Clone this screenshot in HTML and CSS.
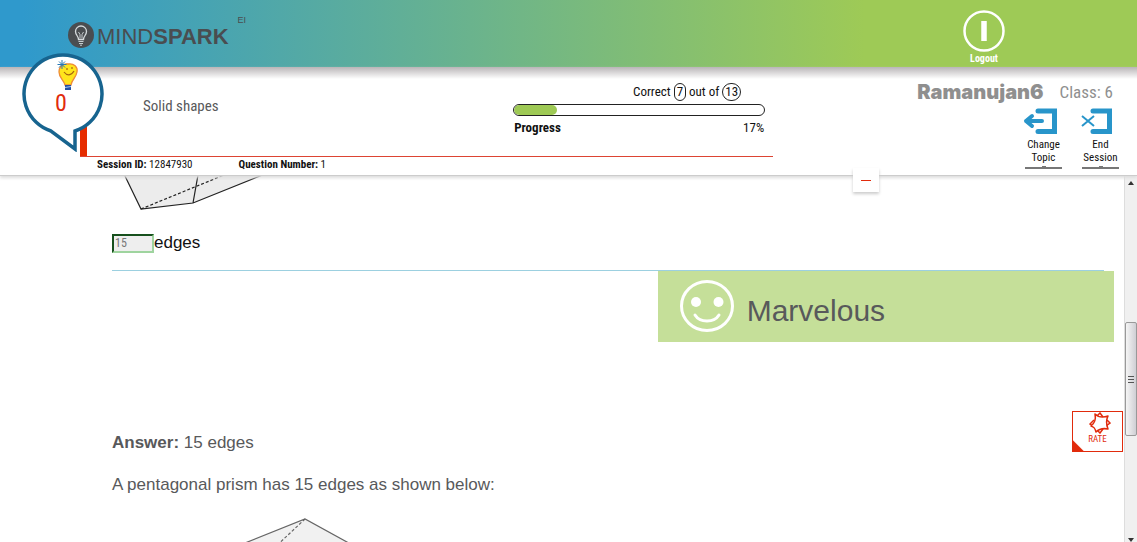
FILE: index.html
```html
<!DOCTYPE html>
<html lang="en">
<head>
<meta charset="utf-8">
<title>Mindspark</title>
<link rel="stylesheet" href="styles.css">
</head>
<body>
<header class="topbar">
  <a class="logo" href="#">
    <svg class="logo-mark" viewBox="0 0 26 26" aria-hidden="true">
      <circle cx="13" cy="13" r="13" fill="#4a4d50"/>
      <path d="M10.500 17.500C10.500 14 7.500 13 7.500 9.500a5.500 5.500 0 0 1 11 0C18.500 13 15.500 14 15.500 17.500z" fill="none" stroke="#d5dadc" stroke-width="1.300"/>
      <path d="M12 16.500v-4l-1.500-2.500M14 16.500v-4l1.500-2.500M10.500 19.500h5M11 21.500h4M12 23.200h2" fill="none" stroke="#d5dadc" stroke-width="0.900"/>
    </svg>
    <span class="logo-text">MIND<b>SPARK</b></span>
    <span class="logo-sup">EI</span>
  </a>
  <button class="logout" type="button">
    <svg class="logout-icon" viewBox="0 0 42 42" aria-hidden="true">
      <circle cx="21" cy="21" r="19.500" fill="none" stroke="#fff" stroke-width="2.500"/>
      <path d="M21 11v20" stroke="#fff" stroke-width="5.500"/>
    </svg>
    <span>Logout</span>
  </button>
</header>

<section class="info">
  <div class="sparkies">
    <svg class="bubble" viewBox="0 0 84 100" aria-hidden="true">
      <path d="M29 79A39 39 0 1 1 53 79V97Z" fill="#fff" stroke="#17648f" stroke-width="3.500"/>
      <path d="M43 33c-1-5-6-7-6-13 0-6 5-9 9-8 6-1 10 3 9 8-1 6-5 7-6 13z" fill="#ffe51c" stroke="#ee8b38" stroke-width="1.300"/>
      <path d="M43 33h6v5h-6z" fill="#2450a0"/>
      <path d="M43 35.500l6-1" stroke="#a9c4ef" stroke-width="1"/>
      <path d="M40 8v9M35.500 12.500h9M37 9.500l6 6M43 9.500l-6 6" stroke="#2879b5" stroke-width="1"/>
      <path d="M45 16v2M50 15v2M42 20c3 4 7 4 10-1" fill="none" stroke="#a76510" stroke-width="1.200"/>
    </svg>
    <span class="spark-count">0</span>
  </div>
  <div class="session">
    <div class="session-top">
      <h1 class="topic">Solid shapes</h1>
      <div class="progress">
        <p class="score">Correct <span class="ring">7</span> out of <span class="ring">13</span></p>
        <div class="track" role="progressbar" aria-label="Progress" aria-valuenow="17" aria-valuemin="0" aria-valuemax="100"><div class="fill" style="width:17%"></div></div>
        <p class="progress-row"><b>Progress</b><span>17%</span></p>
      </div>
    </div>
    <div class="session-row">
      <span class="session-id"><b>Session ID:</b> 12847930</span>
      <span><b>Question Number:</b> 1</span>
    </div>
  </div>
  <div class="user">
    <p class="user-row"><span class="user-name">Ramanujan6</span><span>Class: 6</span></p>
    <div class="actions">
      <button class="action" type="button">
        <svg class="action-icon" viewBox="0 0 34 26" aria-hidden="true">
          <path d="M13 3h16.500v20.500H13" fill="none" stroke="#2895ca" stroke-width="5" stroke-linecap="round"/>
          <path d="M17 13H1M7 8l-6 5 6 5" fill="none" stroke="#fff" stroke-width="7"/>
          <path d="M17 13H1M7 8l-6 5 6 5" fill="none" stroke="#2895ca" stroke-width="4" stroke-linecap="round" stroke-linejoin="round"/>
        </svg>
        <span>Change<br>Topic</span>
      </button>
      <button class="action" type="button">
        <svg class="action-icon" viewBox="0 0 34 26" aria-hidden="true">
          <path d="M11 3h16.500v20.500H11" fill="none" stroke="#2895ca" stroke-width="5" stroke-linecap="round"/>
          <path d="M0 8l12 10M12 8L0 18" fill="none" stroke="#fff" stroke-width="5"/>
          <path d="M0 8l12 10M12 8L0 18" fill="none" stroke="#2895ca" stroke-width="2"/>
        </svg>
        <span>End<br>Session</span>
      </button>
    </div>
  </div>
  <button class="collapse" type="button" aria-label="Collapse header"></button>
</section>

<div class="stage">
  <main class="question">
    <svg class="figure" width="160" height="37" viewBox="0 0 160 37" role="img" aria-label="Pentagonal prism">
      <path d="M12 -2L29 33 81 27 153 -2z" fill="#ececec"/>
      <path d="M12 -2L29 33 81 27 153 -2M86 -1L81 27" fill="none" stroke="#222" stroke-width="1.200"/>
      <path d="M29 33L112 -1" stroke="#222" stroke-width="1.200" stroke-dasharray="3 2"/>
    </svg>
    <p class="blank"><input class="blank-input" id="edges" type="text" value="15" readonly><label for="edges">edges</label></p>
    <div class="feedback">
      <div class="praise">
        <svg class="smiley" viewBox="0 0 54 52" aria-hidden="true">
          <ellipse cx="27" cy="26" rx="25.500" ry="24.500" fill="none" stroke="#fff" stroke-width="3"/>
          <circle cx="16" cy="22" r="5" fill="#fff"/>
          <circle cx="38.500" cy="22" r="5" fill="#fff"/>
          <path d="M15 35c5 8 19 8 24 0" fill="none" stroke="#fff" stroke-width="3" stroke-linecap="round"/>
        </svg>
        <span>Marvelous</span>
      </div>
    </div>
    <div class="answer">
      <p><b>Answer:</b> 15 edges</p>
      <p>A pentagonal prism has 15 edges as shown below:</p>
      <svg class="solution" width="260" height="100" viewBox="0 0 260 100" role="img" aria-label="Pentagonal prism with its edges">
        <path d="M133 26L193 2 255 36 230 100H150z" fill="#f1f1f1"/>
        <path d="M133 26L193 2 255 36" fill="none" stroke="#666" stroke-width="1.200"/>
        <path d="M193 2L160 33" stroke="#666" stroke-width="1.200" stroke-dasharray="3 2"/>
      </svg>
    </div>
  </main>
  <div class="scrollbar" aria-hidden="true">
    <svg class="arrow" viewBox="0 0 6 4"><path d="M0 4l3-4 3 4z" fill="#333"/></svg>
    <div class="thumb"><i></i><i></i><i></i></div>
    <svg class="arrow" viewBox="0 0 6 4"><path d="M0 0h6L3 4z" fill="#333"/></svg>
  </div>
  <button class="rate" type="button">
    <svg class="rate-icon" viewBox="0 0 22 22" aria-hidden="true">
      <path d="M8 4l3-3 3 4M18 8l3 3-4 3M14 17l-3 4-3-3M4 14l-3-2 4-4" fill="none" stroke="#e12b0c" stroke-width="1.500"/>
      <path d="M6 2c3 3 7 4 13 2-2 4-2 8 0 13-5-1-9 0-12 3-1-4-2-5-5-6 4-3 5-7 4-12z" fill="#fff" stroke="#e12b0c" stroke-width="1.500" stroke-linejoin="round"/>
    </svg>
    <span>RATE</span>
  </button>
</div>
</body>
</html>
```

FILE: styles.css
```css
* {
  box-sizing: border-box;
}

body {
  margin: 0;
  height: 100vh;
  display: flex;
  flex-direction: column;
  overflow: hidden;
  background: #fff;
  color: #111;
  font-family: "Liberation Sans", Arial, sans-serif;
}

p, h1 {
  margin: 0;
}

button {
  margin: 0;
  padding: 0;
  border: 0;
  background: none;
  font-family: inherit;
  cursor: pointer;
}

svg {
  display: block;
}

.topbar, .info, .rate {
  font-family: "Liberation Sans Narrow", "Roboto Condensed", "Liberation Sans", sans-serif;
}

.topbar {
  position: relative;
  z-index: 2;
  display: flex;
  justify-content: space-between;
  align-items: flex-start;
  height: 67px;
  flex: none;
  padding: 10px 132px 0 68px;
  background: linear-gradient(90deg, #2f99cc 2%, #9eca56 76%);
}

.logo {
  display: flex;
  align-items: flex-start;
  color: #4a4d50;
  text-decoration: none;
  font-family: "Liberation Sans", Arial, sans-serif;
}

.logo-mark {
  width: 26px;
  height: 26px;
  margin: 12px 3px 0 0;
}

.logo-text {
  margin-top: 13px;
  font-size: 22px;
  line-height: 28px;
}

.logo-sup {
  margin: 5px 0 0 9px;
  font-size: 9px;
  line-height: 10px;
}

.logout {
  display: flex;
  flex-direction: column;
  align-items: center;
  color: #fff;
  font-size: 10px;
  font-weight: bold;
  line-height: 13px;
}

.logout-icon {
  width: 42px;
  height: 42px;
}

.info {
  position: relative;
  z-index: 3;
  display: flex;
  justify-content: space-between;
  flex: none;
  height: 109px;
  border-bottom: 1px solid #ccc;
  box-shadow: 0 2px 3px #ddd;
  background: linear-gradient(#b9b5b7, #fff 12px);
}

.sparkies {
  position: absolute;
  left: 22px;
  top: -15px;
  z-index: 1;
  width: 84px;
}

.bubble {
  width: 84px;
  height: 100px;
}

.spark-count {
  position: absolute;
  top: 38px;
  left: 33px;
  color: #e12b0c;
  font-size: 24px;
  line-height: 26px;
}

.session {
  width: 68%;
  padding-left: 80px;
}

.session-top {
  position: relative;
  display: flex;
  justify-content: space-between;
  align-items: flex-start;
  height: 90px;
  padding: 16px 8px 0 63px;
  border-bottom: 1px solid #dd4433;
}

.session-top::before {
  content: "";
  position: absolute;
  left: 0;
  bottom: 0;
  width: 7px;
  height: 32px;
  background: #e62c00;
}

.topic {
  margin-top: 13px;
  color: #58595b;
  font-size: 15px;
  font-weight: normal;
  line-height: 20px;
}

.progress {
  width: 252px;
  font-size: 13px;
  line-height: 18px;
}

.score {
  padding-right: 24px;
  text-align: right;
}

.ring {
  display: inline-block;
  padding: 0 2px;
  border: 1px solid #222;
  border-radius: 9px;
  line-height: 16px;
}

.track {
  height: 12px;
  margin: 3px 0;
  overflow: hidden;
  border: 1px solid #222;
  border-radius: 6px;
}

.fill {
  height: 100%;
  border-radius: 5px;
  background: #9ec955;
}

.progress-row {
  display: flex;
  justify-content: space-between;
  padding: 0 1px;
}

.session-row {
  display: flex;
  gap: 46px;
  padding-left: 17px;
  font-size: 11px;
  line-height: 16px;
}

.user {
  display: flex;
  flex-direction: column;
  align-items: flex-end;
  padding: 15px 18px 0 0;
}

.user-row {
  display: flex;
  gap: 16px;
  padding-right: 6px;
  color: #8f8f8f;
  font-size: 17px;
  line-height: 20px;
}

.user-name {
  font-family: Inter, "Liberation Sans", Arial, sans-serif;
  font-weight: 900;
  font-size: 20px;
}

.actions {
  display: flex;
  gap: 20px;
  margin-top: 6px;
}

.action {
  position: relative;
  display: flex;
  flex-direction: column;
  align-items: center;
  width: 37px;
  height: 61px;
  border-bottom: 2px solid #777;
  font-size: 11px;
  line-height: 13px;
  color: #111;
}

.action::after {
  content: "";
  position: absolute;
  bottom: 0;
  left: 50%;
  width: 4px;
  height: 1px;
  margin-left: -2px;
  background: #777;
}

.action-icon {
  flex: none;
  align-self: flex-start;
  width: 34px;
  height: 26px;
  margin-bottom: 4px;
  overflow: visible;
}

.collapse {
  position: absolute;
  top: 101px;
  left: 75%;
  width: 26px;
  height: 24px;
  background: #fff;
  box-shadow: 0 2px 3px #ccc;
}

.collapse::before {
  content: "";
  display: block;
  width: 10px;
  height: 1px;
  margin: 0 auto;
  background: #e12b0c;
}

.stage {
  position: relative;
  display: flex;
  flex: 1;
  min-height: 0;
}

.question {
  flex: 1;
  min-width: 0;
  overflow: hidden;
  padding: 0 10px 0 112px;
}

.blank {
  display: flex;
  align-items: center;
  height: 20px;
  margin: 20px 0 17px;
  font-size: 17px;
}

.blank-input {
  width: 42px;
  height: 19px;
  padding: 0 1px;
  border: 2px solid;
  border-color: #17501d #9fd49f #9fd49f #17501d;
  background: #eee;
  color: #777;
  font-family: "Liberation Sans Narrow", "Roboto Condensed", "Liberation Sans", sans-serif;
  font-size: 12px;
}

.feedback {
  margin-right: 10px;
  border-top: 1px solid #9cd0e0;
}

.praise {
  display: flex;
  align-items: center;
  gap: 13px;
  width: 46%;
  height: 71px;
  margin-left: auto;
  margin-right: -10px;
  padding-left: 22px;
  background: #c5df99;
  color: #58595b;
  font-size: 30px;
}

.smiley {
  width: 54px;
  height: 52px;
  margin-bottom: 2px;
}

.praise span {
  padding-top: 9px;
}

.answer {
  margin-top: 91px;
  color: #58595b;
  font-size: 17px;
  line-height: 20px;
}

.answer p {
  margin-bottom: 22px;
}

.scrollbar {
  display: flex;
  flex-direction: column;
  justify-content: space-between;
  align-items: center;
  width: 13px;
  padding: 5px 0 0;
  border-left: 1px solid #ddd;
  background: #f0f0f0;
}

.arrow {
  width: 6px;
  height: 4px;
}

.thumb {
  display: flex;
  flex-direction: column;
  align-items: center;
  justify-content: center;
  gap: 2px;
  width: 12px;
  height: 114px;
  margin-top: 35px;
  border: 1px solid #999;
  border-radius: 2px;
  background: linear-gradient(90deg, #f5f5f5, #cfcfd4);
}

.thumb i {
  width: 6px;
  height: 1px;
  background: #555;
}

.rate {
  position: absolute;
  right: 14px;
  top: 235px;
  display: flex;
  flex-direction: column;
  align-items: center;
  width: 51px;
  height: 41px;
  border: 1px solid #e12b0c;
  background: linear-gradient(45deg, #e12b0c 7px, #fff 8px);
  color: #e12b0c;
  font-size: 9px;
  line-height: 10px;
}

.rate-icon {
  width: 22px;
  height: 22px;
  margin-left: 4px;
}
```
